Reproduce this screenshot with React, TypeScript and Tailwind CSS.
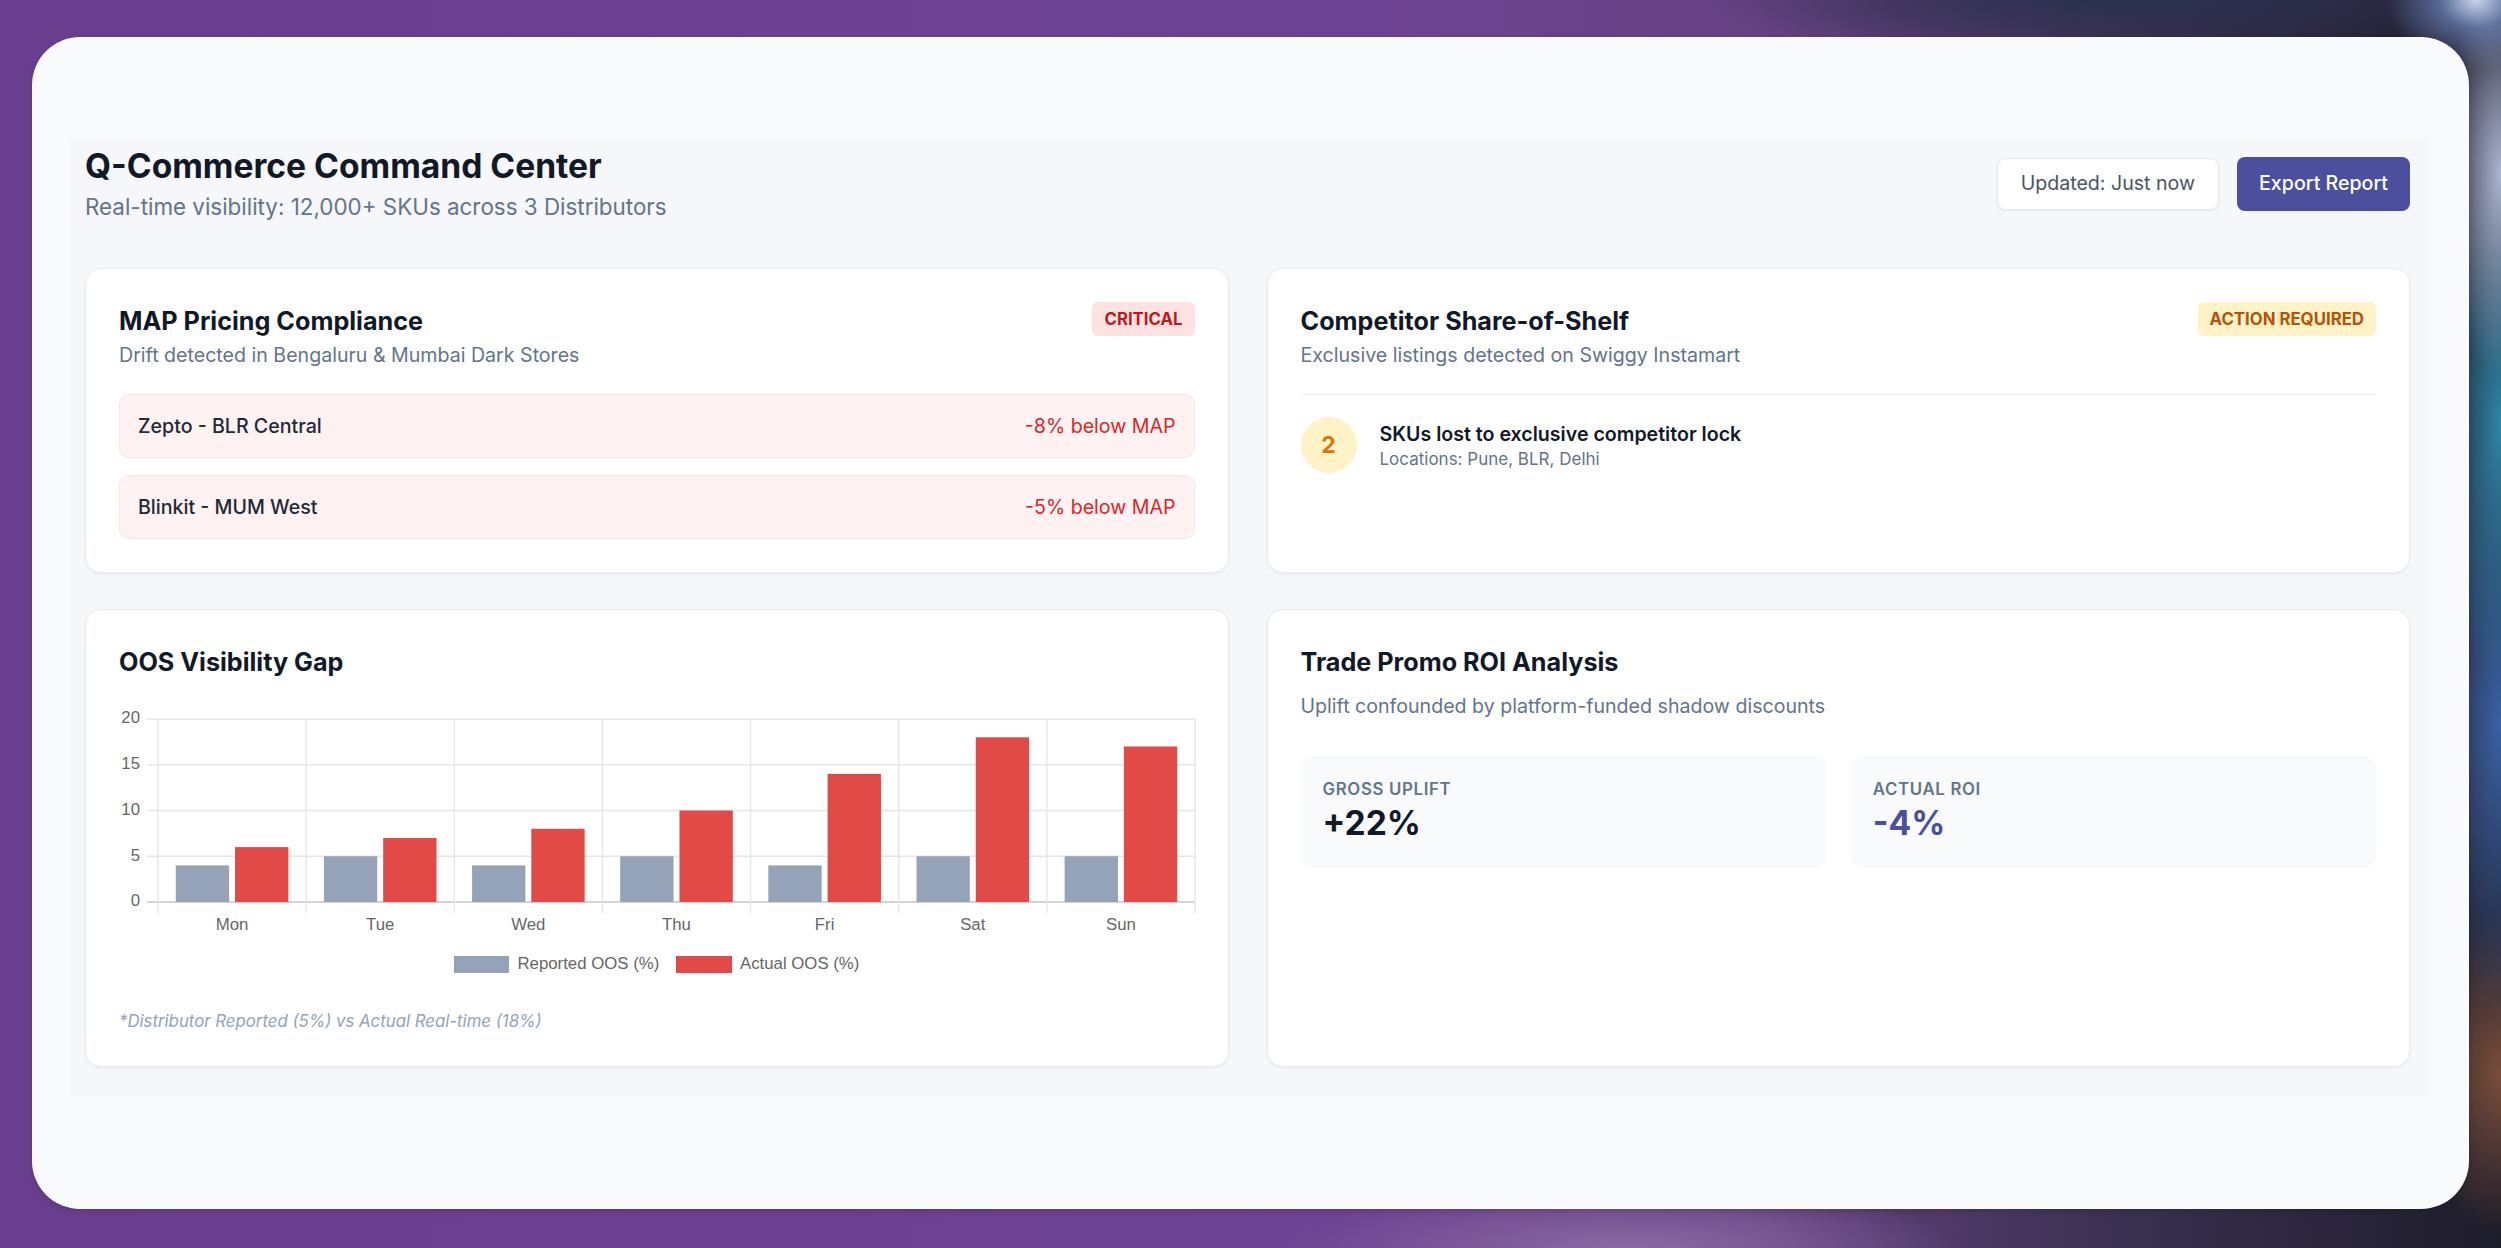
import React from "react";

const days = ["Mon", "Tue", "Wed", "Thu", "Fri", "Sat", "Sun"];
const reported = [4, 5, 4, 5, 4, 5, 5];
const actual = [6, 7, 8, 10, 14, 18, 17];

function OosChart() {
  const plotLeft = 39;
  const plotRight = 1076;
  const cat = (plotRight - plotLeft) / 7;
  const y0 = 212;
  const unit = 183 / 20;
  const barW = ((cat * 0.8) / 2) * 0.9;
  const ticks = [0, 5, 10, 15, 20];
  const font = "Liberation Sans, Arial, sans-serif";
  return (
    <svg width="1076" height="300" className="block overflow-visible">
      {ticks.map((t) => {
        const y = y0 - t * unit;
        const strong = t === 0;
        return (
          <g key={t}>
            <line x1={28} x2={plotRight} y1={y} y2={y} stroke={strong ? "#d4d4d4" : "#e6e6e6"} strokeWidth={strong ? 2 : 1.4} />
            <text x={21} y={y} textAnchor="end" dominantBaseline="middle" fontFamily={font} fontSize="16.8" fill="#666">
              {t}
            </text>
          </g>
        );
      })}
      {Array.from({ length: 8 }).map((_, i) => {
        const x = plotLeft + i * cat;
        return <line key={i} x1={x} x2={x} y1={29} y2={223} stroke="#e6e6e6" strokeWidth={1.4} />;
      })}
      {days.map((d, i) => {
        const start = plotLeft + i * cat + cat * 0.1;
        const gx = start + cat * 0.4 * 0.05;
        const rx = start + cat * 0.4 + cat * 0.4 * 0.05;
        const gh = reported[i] * unit;
        const rh = actual[i] * unit;
        return (
          <g key={d}>
            <rect x={gx} y={y0 - gh} width={barW} height={gh} fill="#94a3b8" />
            <rect x={rx} y={y0 - rh} width={barW} height={rh} fill="#e24a48" />
            <text x={plotLeft + i * cat + cat / 2} y={236} textAnchor="middle" dominantBaseline="middle" fontFamily={font} fontSize="16.8" fill="#666">
              {d}
            </text>
          </g>
        );
      })}
      <rect x={335} y={266} width={55} height={17} fill="#94a3b8" />
      <text x={398.5} y={275} dominantBaseline="middle" fontFamily={font} fontSize="16.8" fill="#666">
        Reported OOS (%)
      </text>
      <rect x={557} y={266} width={56} height={17} fill="#e24a48" />
      <text x={621} y={275} dominantBaseline="middle" fontFamily={font} fontSize="16.8" fill="#666">
        Actual OOS (%)
      </text>
    </svg>
  );
}

function Card({ children }: { children: React.ReactNode }) {
  return (
    <div className="bg-white rounded-[16px] border border-[#e9ecf1] shadow-[0_1px_3px_rgba(15,23,42,0.06)] pt-[33px] pb-[33px] pl-[33px] pr-[33px] flex flex-col">
      {children}
    </div>
  );
}

export default function App() {
  return (
    <div className="w-[2501px] h-[1248px] overflow-hidden flex pt-[37px] pb-[39px] pl-[32px] pr-[32px] font-[family-name:Inter,sans-serif] bg-[image:radial-gradient(90px_70px_at_99%_0%,#c9d6ee_0%,rgba(120,150,210,0.6)_40%,transparent_100%),radial-gradient(60px_200px_at_100%_14%,#aeb7d2_0%,transparent_100%),radial-gradient(60px_260px_at_100%_34%,#2f86a6_0%,transparent_100%),radial-gradient(70px_300px_at_100%_58%,#3b62a4_0%,transparent_100%),radial-gradient(90px_160px_at_100%_86%,#7a4d3a_0%,transparent_100%),radial-gradient(340px_60px_at_65%_100%,#8a6aa2_0%,transparent_100%),radial-gradient(420px_50px_at_85%_0%,#2b3150_0%,transparent_100%),linear-gradient(90deg,#6a3e8e_0%,#6d4393_55%,#654282_70%,#3a3050_85%,#1e1d2a_100%)]">
      <div className="flex-1 bg-[#f8fafc] rounded-[48px] shadow-[0_2px_6px_rgba(0,0,0,0.15)] pt-[103px] pb-[113px] pl-[38px] pr-[39px] flex flex-col">
        <div className="bg-[#f5f7fa] pt-[4px] pb-[29px] pl-[15px] pr-[20px] flex flex-col">
          {/* Header */}
          <div className="flex items-center justify-between">
            <div>
              <h1 className="text-[33.6px] leading-[44.8px] font-bold text-[#111827]">Q-Commerce Command Center</h1>
              <p className="mt-[1px] text-[22.4px] leading-[33.6px] text-[#64748b]">
                Real-time visibility: 12,000+ SKUs across 3 Distributors
              </p>
            </div>
            <div className="flex items-center gap-[18px]">
              <div className="h-[52px] px-[23px] flex items-center bg-white border border-[#e5e7eb] rounded-[8px] shadow-[0_1px_2px_rgba(0,0,0,0.05)] text-[19.6px] text-[#4b5563]">
                Updated: Just now
              </div>
              <button className="h-[54px] px-[22px] flex items-center bg-[#4b4f9e] rounded-[8px] text-[19.6px] font-medium text-white">
                Export Report
              </button>
            </div>
          </div>

          {/* Grid */}
          <div className="mt-[45px] grid grid-cols-2 gap-x-[38px] gap-y-[36px]">
            {/* MAP Pricing */}
            <Card>
              <div className="flex justify-between items-start">
                <div>
                  <h2 className="text-[25.2px] leading-[39px] font-bold text-[#111827]">MAP Pricing Compliance</h2>
                  <p className="text-[19.6px] leading-[28px] text-[#64748b]">Drift detected in Bengaluru &amp; Mumbai Dark Stores</p>
                </div>
                <span className="h-[34px] px-[12px] flex items-center rounded-[6px] bg-[#fee2e2] text-[#b91c1c] text-[16.8px] font-bold">
                  CRITICAL
                </span>
              </div>
              <div className="mt-[25px] flex flex-col gap-[17px]">
                <div className="h-[64px] px-[18px] flex items-center justify-between rounded-[10px] bg-[#fef2f2] border border-[#fde4e4]">
                  <span className="text-[19.6px] font-medium text-[#1f2937]">Zepto - BLR Central</span>
                  <span className="text-[19.6px] text-[#dc2626]">-8% below MAP</span>
                </div>
                <div className="h-[64px] px-[18px] flex items-center justify-between rounded-[10px] bg-[#fef2f2] border border-[#fde4e4]">
                  <span className="text-[19.6px] font-medium text-[#1f2937]">Blinkit - MUM West</span>
                  <span className="text-[19.6px] text-[#dc2626]">-5% below MAP</span>
                </div>
              </div>
            </Card>

            {/* Competitor */}
            <Card>
              <div className="flex justify-between items-start pb-[25px] border-b border-[#eef0f4]">
                <div>
                  <h2 className="text-[25.2px] leading-[39px] font-bold text-[#111827]">Competitor Share-of-Shelf</h2>
                  <p className="text-[19.6px] leading-[28px] text-[#64748b]">Exclusive listings detected on Swiggy Instamart</p>
                </div>
                <span className="h-[34px] px-[12px] flex items-center rounded-[6px] bg-[#fef3c7] text-[#b45309] text-[16.8px] font-bold">
                  ACTION REQUIRED
                </span>
              </div>
              <div className="pt-[22px] flex items-center gap-[23px]">
                <div className="w-[56px] h-[56px] rounded-full bg-[#fef3c7] flex items-center justify-center text-[23px] font-bold text-[#d97706]">
                  2
                </div>
                <div className="flex flex-col">
                  <span className="text-[19.6px] leading-[28px] font-semibold text-[#111827]">SKUs lost to exclusive competitor lock</span>
                  <span className="text-[17px] leading-[22.4px] text-[#64748b]">Locations: Pune, BLR, Delhi</span>
                </div>
              </div>
            </Card>

            {/* OOS */}
            <Card>
              <h2 className="text-[25.2px] leading-[39px] font-bold text-[#111827]">OOS Visibility Gap</h2>
              <div className="mt-[8px]">
                <OosChart />
              </div>
              <p className="mt-[19px] text-[16.8px] leading-[24px] italic text-[#94a3b8]">
                *Distributor Reported (5%) vs Actual Real-time (18%)
              </p>
            </Card>

            {/* Trade Promo */}
            <Card>
              <h2 className="text-[25.2px] leading-[39px] font-bold text-[#111827]">Trade Promo ROI Analysis</h2>
              <p className="mt-[10px] text-[19.6px] leading-[28px] text-[#64748b]">Uplift confounded by platform-funded shadow discounts</p>
              <div className="mt-[36px] grid grid-cols-2 gap-[25px]">
                <div className="rounded-[11px] bg-[#f8fafc] p-[22px]">
                  <div className="text-[16.8px] leading-[22.4px] font-semibold tracking-[0.04em] text-[#64748b]">GROSS UPLIFT</div>
                  <div className="text-[33.6px] leading-[44.8px] font-bold text-[#111827]">+22%</div>
                </div>
                <div className="rounded-[11px] bg-[#f8fafc] p-[22px]">
                  <div className="text-[16.8px] leading-[22.4px] font-semibold tracking-[0.04em] text-[#64748b]">ACTUAL ROI</div>
                  <div className="text-[33.6px] leading-[44.8px] font-bold text-[#4b4f9e]">-4%</div>
                </div>
              </div>
            </Card>
          </div>
        </div>
      </div>
    </div>
  );
}
